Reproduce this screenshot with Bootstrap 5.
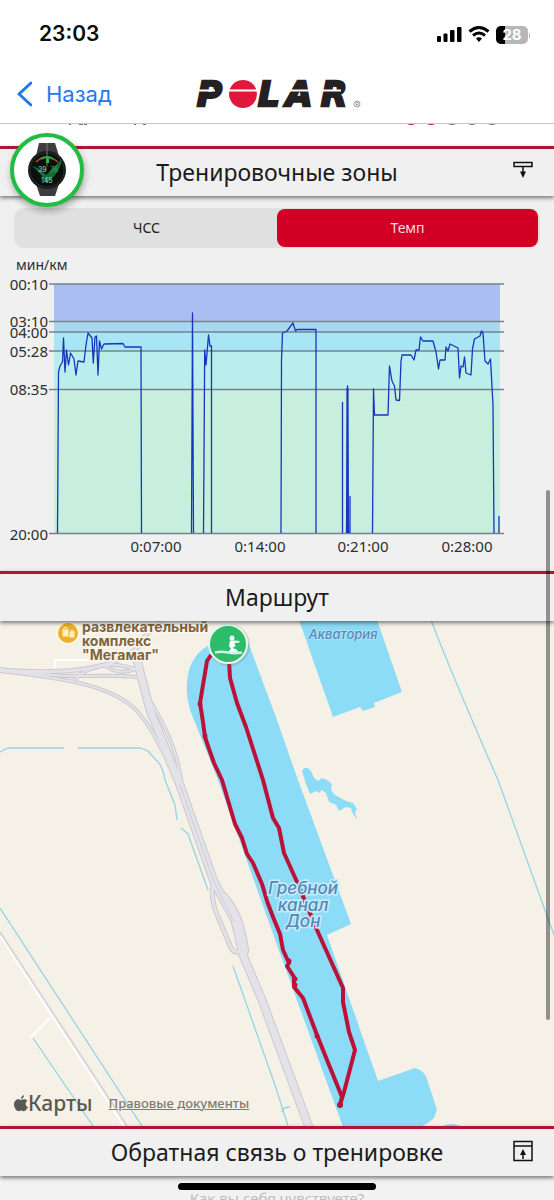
<!DOCTYPE html>
<html lang="ru">
<head>
<meta charset="utf-8">
<meta name="viewport" content="width=device-width, initial-scale=1">
<title>Polar</title>
<link href="https://cdn.jsdelivr.net/npm/bootstrap@5.3.0/dist/css/bootstrap.min.css" rel="stylesheet">
<style>
  body { font-family: "Noto Sans", "Open Sans", sans-serif; background: #f0f0f0; color: #1b1b1b; }
  svg { display: block; }
  .app { min-height: 100vh; }
  .status-bar { height: 68px; padding: 0 24px 0 39px; font: 600 21px/28px Inter, sans-serif; color: #0c0c0c; }
  .nav-row { height: 56px; padding-bottom: 4px; border-bottom: 1px solid #c9c9c9; }
  .back-link { font: 400 22px/28px Inter, sans-serif; color: #1f7af0; }
  .back-link svg { margin-right: 14px; }
  .scrolled-row { height: 22px; }
  .section-bar { height: 50px; padding-bottom: 2px; border-top: 3px solid #b01535; background: #f0f0f0; box-shadow: 0 2px 4px rgba(0,0,0,.5); z-index: 2; }
  .section-bar h2 { font-size: 23px; line-height: 32px; }
  .bar-icon { right: 20px; top: 11px; }
  .watch-badge { width: 74px; height: 74px; left: 10px; top: -16px; border: 4px solid #20bd42; box-shadow: 1px 4px 7px rgba(0,0,0,.3); }
  .segments { margin: 12px 14px 0; border-radius: 10px; background: #e0e0e0; height: 40px; padding: 1px 2px; }
  .segments .btn { font-size: 14px; line-height: 20px; border: 0; border-radius: 8px; color: #222; }
  .segments .btn.active { background: #d10024; color: #fbd9df; }
  .chart-text { font: 15px "Noto Sans", sans-serif; fill: #2c2e30; }
  .map-legal { left: 14px; bottom: 10px; }
  .maps-brand { font-size: 21px; line-height: 26px; font-weight: 500; color: #595853; }
  .legal-link { font-size: 13px; line-height: 18px; font-weight: 500; color: #7d7b75; }
  .poi { font: 700 14px Inter, sans-serif; fill: #80643c; stroke: #faf7ef; stroke-width: 3px; paint-order: stroke; }
  .water-name { font: italic 500 17px Inter, sans-serif; fill: #5488b8; stroke: #c9ecfa; stroke-width: 3px; paint-order: stroke; text-anchor: middle; }
  .water-name .minor { font-size: 13px; stroke-width: 1px; }
  .next-row { height: 24px; background: #f2f2f2; }
  .question { font-size: 15px; line-height: 20px; color: #bdbdbd; padding-top: 12px; }
  .home-indicator { width: 198px; height: 7px; top: 7px; background: #000; z-index: 3; }
  .scroll-thumb { right: 4px; top: 490px; width: 4px; height: 530px; background: rgba(0,0,0,.4); z-index: 4; }
</style>
</head>
<body>
<div class="app d-flex flex-column position-relative overflow-hidden">
  <header class="bg-white">
    <div class="status-bar d-flex align-items-center justify-content-between">
      <span>23:03</span>
      <svg width="96" height="20" viewBox="0 0 96 20" aria-label="Сеть, Wi-Fi, заряд 28">
        <g fill="#000">
          <rect x="3" y="12" width="4" height="6" rx="1"/><rect x="9.500" y="9.500" width="4" height="8.500" rx="1"/><rect x="16" y="6" width="4.500" height="12" rx="1"/><rect x="23" y="3" width="4.500" height="15" rx="1"/>
        </g>
        <g fill="none" stroke="#000" stroke-width="3"><path d="M35.500 7.500Q45 -.5 54.500 7.500M39 11.500Q45 6.500 51 11.500"/></g>
        <path d="M45 18l-3-3.500q3-2.500 6 0z"/>
        <rect x="62" y="2" width="32" height="18" rx="5" fill="#b7b7b7"/>
        <path d="M67 2h4v18h-4a5 5 0 0 1-5-5V7a5 5 0 0 1 5-5z"/>
        <text x="78" y="16" text-anchor="middle" font-family="Inter, sans-serif" font-size="15" font-weight="700" fill="#fff">28</text>
        <rect x="95" y="9" width="1" height="5" fill="#b7b7b7"/>
      </svg>
    </div>
    <nav class="nav-row d-flex align-items-center justify-content-center position-relative">
      <a href="#" class="back-link d-flex align-items-center text-decoration-none position-absolute start-0 ms-3">
        <svg width="16" height="28" viewBox="0 0 16 28" fill="none" stroke="#1f7af0" stroke-width="3" stroke-linecap="round" stroke-linejoin="round"><path d="M15 3L3 14l12 11"/></svg>
        Назад
      </a>
      <svg width="168" height="42" viewBox="0 0 168 42" role="img" aria-label="Polar">
        <g font-family="DejaVu Sans, sans-serif" font-size="34" font-weight="700" font-style="italic" fill="#252122" stroke="#252122" stroke-width="2.500">
          <text x="4" y="33">P</text><text x="65" y="33">L</text><text x="93" y="33">A</text><text x="128" y="33">R</text>
        </g>
        <circle cx="50" cy="21" r="14" fill="#e2173c"/>
        <path d="M2 17.500h20M35 17.500h30M94 17.500h32M128 17.500h20" stroke="#fff" stroke-width="2"/>
        <circle cx="164" cy="31" r="3" fill="none" stroke="#777" stroke-width=".7"/><text x="164" y="33" font-family="Inter, sans-serif" font-size="5" text-anchor="middle" fill="#777">R</text>
      </svg>
    </nav>
  </header>

  <div class="scrolled-row bg-white">
    <svg width="100%" height="4" viewBox="0 0 554 4" preserveAspectRatio="none">
      <path d="M69 0h2v1h-2zM79 0h4v1h-4zM84 0h3v1h-3zM134 0h2v1h-2zM143 0h3v1h-3z" fill="#777"/>
      <path d="M407 0h8q-4 2-8 0zM427 0h8q-4 2-8 0z" fill="#b3243f"/><path d="M448 0h8q-4 2-8 0zM468 0h8q-4 2-8 0zM488 0h8q-4 2-8 0z" fill="#777"/>
    </svg>
  </div>

  <div class="section-bar position-relative d-flex align-items-center justify-content-center">
    <div class="watch-badge position-absolute rounded-circle bg-white d-flex align-items-center justify-content-center">
      <svg width="42" height="56" viewBox="0 0 42 56">
        <path d="M13 1h16l4 13H10zM10 42h23l-4 12H14z" fill="#3d3d3d"/>
        <circle cx="21" cy="28" r="19" fill="#171a1a"/><circle cx="21" cy="28" r="17" fill="#0b100e" stroke="#292d2c"/>
        <path d="M10 20q10-10 22 0" fill="none" stroke="#bc4932" stroke-width="1.500"/><path d="M15 17q6-4 12 0" fill="none" stroke="#22a645" stroke-width="2"/>
        <path d="M6 24q8 2 14 9L36 17q-2 14-15 24Q14 30 6 24z" fill="#176b36"/>
        <path d="M21 1v23" stroke="#777"/><path d="M20 16h3v5h-3z" fill="#26b64c"/>
        <g font-family="Inter, sans-serif" font-size="7" fill="#a9dcb4"><text x="12" y="30">39</text><text x="24" y="30" fill="#38aa58">76</text><text x="15" y="41">145</text></g>
      </svg>
    </div>
    <h2 class="m-0 fw-normal">Тренировочные зоны</h2>
    <svg class="bar-icon position-absolute" width="22" height="22" viewBox="0 0 22 22"><path d="M2 2.500h18v4H2zM11 6.500v6" fill="none" stroke="#111" stroke-width="1.500"/><path d="M8 11.500h6L11 18z" fill="#111"/></svg>
  </div>

  <section>
    <div class="segments d-flex" role="group" aria-label="Показатель">
      <button type="button" class="btn w-50">ЧСС</button>
      <button type="button" class="btn w-50 active">Темп</button>
    </div>
    <svg width="100%" viewBox="0 248 554 323" role="img" aria-label="Темп, мин/км">
      <rect x="54" y="284" width="446" height="38" fill="#abbef1"/>
      <rect x="54" y="321" width="446" height="11" fill="#a9d7f0"/>
      <rect x="54" y="332" width="446" height="19" fill="#a8e5f5"/>
      <rect x="54" y="351" width="446" height="38" fill="#baeeed"/>
      <rect x="54" y="389" width="446" height="145" fill="#c8eede"/>
      <path d="M49 284h455M49 321.500h455M49 332h455M49 351h455M49 389.500h455M49 533.500h455" stroke="#74828d" stroke-width="1.300"/>
      <g fill="none" stroke="#1637bd" stroke-width="1.300" stroke-linejoin="round">
        <path d="M57.500 533L58.500 372 60 366 62.500 362 63.500 338 65 372 66.500 350 68.500 365 70.500 353 74 359 76 375 78 361 84 362 86 345 88 333 92 338 93.300 363 95 337 96.500 336 98 375 99.500 341 101.500 349 104 344 123 343.500 125 347 141 347 141.500 533"/>
        <path d="M191.500 533L192.500 313 193.500 533M203.500 533L204.700 350 206 365 208.500 335 210 346 211.500 346 211.500 533"/>
        <path d="M281 533L281.500 360 282.500 333 287 331 293 323 295.500 331 297 329.500 316 329.500 316 533"/>
        <path d="M342.500 533V402M346.500 533L347.500 386 348.500 533M350 533V496"/>
        <path d="M372.500 533L373.500 389 374.500 415 388 415 389.500 366 392 381 394.500 386 396 400 399.500 400.500 401 361 402 355 411 355 414 360 416 350 419 350 420.500 337 423 341 433 341 436 352 438.500 369 440 360 445 360 446 347 448 351 450 344 458 348 459.500 378 461 366 463 367 464.500 357 466 373 471 375 472.500 349 474.500 339 480 336 481.500 331 483 333 485 361 488 364 490.500 359 493 405 494 533M499 533V516" />
        <path d="M347.500 533V388" stroke-width="2"/>
      </g>
      <g class="chart-text">
        <text x="16" y="270" font-size="14">мин/км</text>
        <g text-anchor="end"><text x="48" y="290">00:10</text><text x="48" y="327">03:10</text><text x="48" y="338">04:00</text><text x="48" y="357">05:28</text><text x="48" y="395">08:35</text><text x="48" y="540">20:00</text></g>
        <g text-anchor="middle"><text x="156" y="552">0:07:00</text><text x="260" y="552">0:14:00</text><text x="363" y="552">0:21:00</text><text x="467" y="552">0:28:00</text></g>
      </g>
    </svg>
  </section>

  <div class="section-bar position-relative d-flex align-items-center justify-content-center">
    <h2 class="m-0 fw-normal">Маршрут</h2>
  </div>

  <section class="position-relative">
    <svg width="100%" viewBox="0 621 554 505" role="img" aria-label="Карта маршрута">
      <rect y="620" width="554" height="507" fill="#f5f1e6"/>
      <!-- streams -->
      <g fill="none" stroke="#93d4e5" stroke-width="1.300">
        <path d="M431 620Q450 670 498 780L554 935M0 752l8-4h56M78 748h62l8 3 10 11q5 5 7 18l10 25 2 15M181 828l7 6 20 56M0 908L142 1126M33 1038L93 1126M233 966l43 122 12 38M290 1107q-7 0-8 5"/>
      </g>
      <!-- country road -->
      <path d="M0 936L124 1126M50 1018L30 1038" fill="none" stroke="#fff" stroke-width="2"/>
      <path d="M0 932L127 1126" stroke="#d8d7d8" stroke-width="2"/>
      <!-- interchange -->
      <g fill="none" stroke-linejoin="round">
        <g stroke="#cac9cf">
          <path d="M0 670Q70 675 104 665T145 636L162 621" stroke-width="5"/>
          <path d="M0 669Q55 677 84 676T138 677L143 683M0 671Q45 676 75 682Q120 692 138 712T180 790M74 680Q100 654 142 672M143 690Q180 745 182 790M103 664Q120 678 138 667" stroke-width="4"/>
          <path d="M137 660L150 710 180 785 214 882 235 920 243 955 262 1000 310 1130" stroke-width="9"/>
          <path d="M213 882Q210 900 218 917L231 948Q236 955 243 950" stroke-width="5"/>
          <path d="M219 890Q236 905 242 930T245 952" stroke-width="6"/>
        </g>
        <g stroke="#e3e2e8">
          <path d="M0 670Q70 675 104 665T145 636L162 621" stroke-width="3"/>
          <path d="M0 669Q55 677 84 676T138 677L143 683M0 671Q45 676 75 682Q120 692 138 712T180 790M74 680Q100 654 142 672M143 690Q180 745 182 790M103 664Q120 678 138 667" stroke-width="2"/>
          <path d="M137 660L150 710 180 785 214 882 235 920 243 955 262 1000 310 1130" stroke-width="7"/>
          <path d="M213 882Q210 900 218 917L231 948Q236 955 243 950" stroke-width="3"/>
          <path d="M219 890Q236 905 242 930T245 952" stroke-width="4"/>
        </g>
        <path d="M180 785L214 882 234 922" stroke="#cfced6"/>
        <path d="M55 668v-8h35" stroke="#fff" stroke-width="2"/>
      </g>
      <!-- water -->
      <g fill="#8cdcf7">
        <path d="M220 640Q196 648 189 670Q184 690 190 710L218 780 277 945 343 1127H420Q431 1122 434 1118L437 1110 426 1076Q421 1069 415 1068L378 1081 327 935 351 924 298 780 277 720 248 642Z"/>
        <path d="M299 620L333 717 360 707 363 711 375 707 374 703 402 692 377 620z"/>
        <path d="M302 771L304 768 308 768 311 771 314 778 318 781 322 778 327 780 332 784 331 790 335 795 346 801 353 803 357 809 355 812 357 820 352 812 351 808 346 807 339 811 336 805 329 802 326 793 322 790 319 793 316 791 310 794 306 784z"/>
        <path d="M440 1127q12-6 22 0z"/>
      </g>
      <!-- track -->
      <path d="M211 655L207 661 203 685 200 703 203 722 205 737 208 746 214 763 222 780 235 824 242 838 247 854 253 863 262 884 267 901 273 917 280 934 283 950 289 963 287 966 294 977 294 987 303 998 317 1035 325 1055 342 1097 340 1105 344 1092 355 1050 349 1032 343 1002 343 988 317 930 297 882 284 853 279 828 273 818 263 780 246 727 237 703 230 678 229 660" fill="none" stroke="#bc1238" stroke-width="4" stroke-linejoin="round"/>
      <g fill="#bc1238"><circle cx="200" cy="704" r="2.500"/><circle cx="205" cy="736" r="2.500"/><circle cx="289" cy="961" r="2.500"/><circle cx="295" cy="979" r="2.500"/><circle cx="295" cy="985" r="2.500"/><circle cx="317" cy="1036" r="2.500"/><circle cx="340" cy="1105" r="3"/></g>
      <!-- names -->
      <g class="poi"><text x="82" y="632">развлекательный</text><text x="82" y="646">комплекс</text><text x="82" y="660">"Мегамаг"</text></g>
      <g class="water-name"><text x="303" y="894">Гребной</text><text x="303" y="911">канал</text><text x="303" y="927">Дон</text><text class="minor" x="343" y="639">Акватория</text></g>
      <circle cx="68" cy="633" r="11" fill="#efb02c" stroke="#fcf7e9" stroke-width="2"/>
      <path d="M62.500 629.500h6v7h-6zM69.500 631.500h5v6h-5z" fill="#fff1bd"/><path d="M64 629.500v-2h3v2M71 631.500v-1h2v1" fill="none" stroke="#fff1bd"/>
      <circle cx="229" cy="645" r="21" fill="#65746a" opacity=".25"/>
      <circle cx="228" cy="644" r="19" fill="#2cbc6a" stroke="#ecf7ed" stroke-width="2"/>
      <path d="M230 640.500h4.500l5 .5v1.500l-5 .5 1 3-3 2 4 1.500 2.500 3H228l3-4-2-2z" fill="#fff"/>
      <path d="M215 652.500q6-1.500 13 0t14 0" fill="none" stroke="#d8f3e3" stroke-width="2.500"/><circle cx="232" cy="638" r="2.500" fill="#fff"/>
    </svg>
    <div class="map-legal position-absolute d-flex align-items-center">
      <svg width="14" height="17" viewBox="0 0 14 17" fill="#595853"><path d="M7 5C4 3 0 5 0 9.500 0 13 3 17 5 16q2-1 4 0c2 1 4-2 5-4-3-1-3-5-.5-6C12 3.500 9 4 7 5zM7 4q0-3 3-4 0 3-3 4z"/></svg>
      <span class="maps-brand">Карты</span>
      <a href="#" class="legal-link ms-3">Правовые документы</a>
    </div>
  </section>

  <div class="section-bar position-relative d-flex align-items-center justify-content-center">
    <h2 class="m-0 fw-normal">Обратная связь о тренировке</h2>
    <svg class="bar-icon position-absolute" width="22" height="22" viewBox="0 0 22 22"><path d="M2 1.500h18v19H2zM2 6h18M11 19v-6" fill="none" stroke="#111" stroke-width="1.500"/><path d="M8 15h6l-3-6z" fill="#111"/></svg>
  </div>

  <footer class="next-row position-relative overflow-hidden d-flex justify-content-center">
    <div class="home-indicator position-absolute rounded-pill"></div>
    <div class="question">Как вы себя чувствуете?</div>
  </footer>
  <div class="scroll-thumb position-absolute rounded-pill"></div>
</div>
<script src="https://cdn.jsdelivr.net/npm/bootstrap@5.3.0/dist/js/bootstrap.bundle.min.js"></script>
</body>
</html>
